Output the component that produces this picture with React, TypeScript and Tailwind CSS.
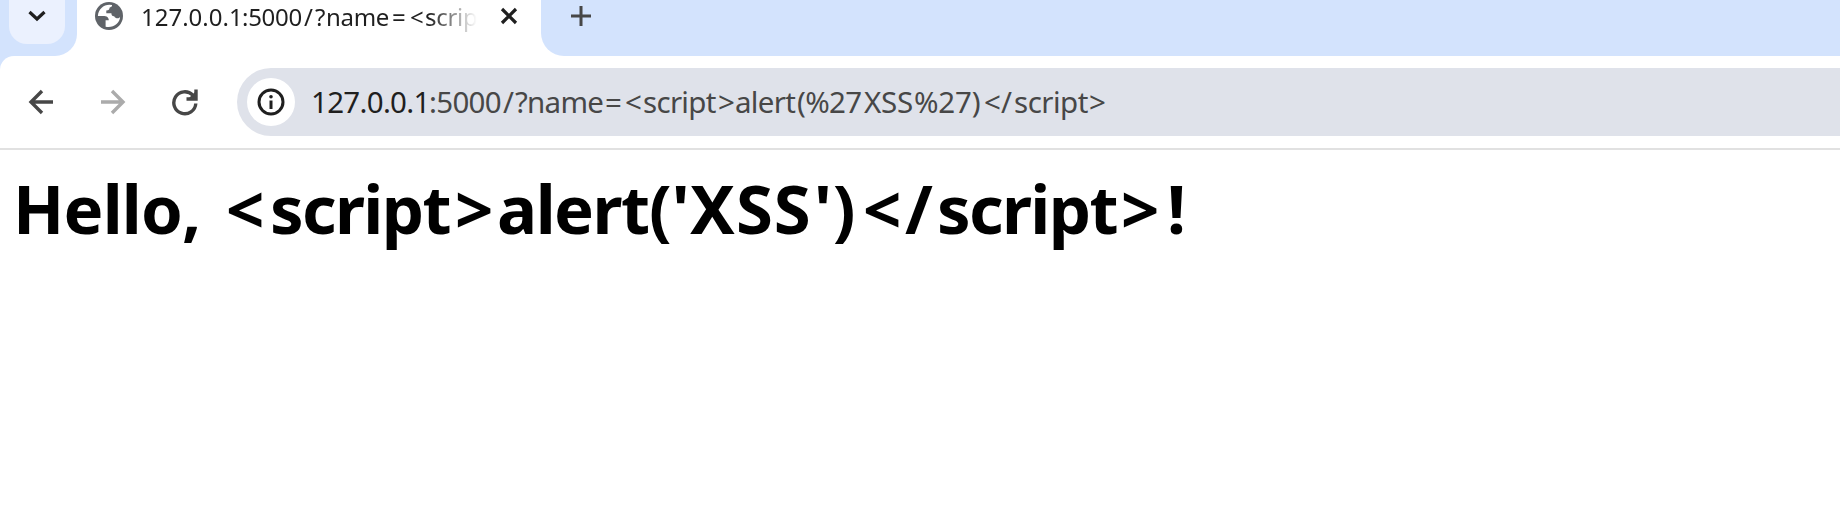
import { ReactNode } from "react";

function Seg({ w, children }: { w: string; children: ReactNode }) {
  return <span className={"inline-block shrink-0 " + w}>{children}</span>;
}

function TabStrip() {
  return (
    <div className="flex h-14 bg-[#d3e3fd]">
      <div className="flex h-14 w-[77px] shrink-0 bg-white">
        <div className="h-14 w-[77px] rounded-br-[22px] bg-[#d3e3fd] pl-[9px]">
          <div className="flex h-11 w-14 items-start justify-center rounded-b-[18px] bg-[#ebf1fe]">
            <svg width="18" height="12" viewBox="0 0 18 12" className="mt-[10px]">
              <path d="M1.5 2 L9 9 L16.500 2" fill="none" stroke="#1f1f1f" strokeWidth="3.2" />
            </svg>
          </div>
        </div>
      </div>
      <div className="flex h-14 w-[464px] shrink-0 items-start bg-white pl-[18px]">
        <svg width="28" height="28" viewBox="0 0 28 28" className="mt-[2px] shrink-0">
          <circle cx="14" cy="14" r="14" fill="#5f6368" />
          <path
            d="M14.500 2.800 C8.300 2.800 3.300 7.600 2.900 13.900 L8 13.900 C12 13.900 13.700 15.300 13.800 18.300 L10.600 18.300 L10.600 24.700 C18 26.500 25 21 25.100 14.700 C24 16.900 20.400 16.700 19.200 14.200 C17.300 14.300 16.400 13.300 16.400 11.200 L11.300 11.200 L11.300 8.500 C13.800 8.300 14.600 7.400 14.500 5.800 L17 4.200 L17 3 Z"
            fill="#fff"
          />
        </svg>
        <div className="ml-[18px] flex h-[34px] w-[340px] overflow-hidden whitespace-pre text-[24px] leading-[34px] tracking-[-0.3px] text-[#1f1f1f] [mask-image:linear-gradient(to_right,black_288px,transparent_336px)]">
          <Seg w="w-[101px] tracking-[0px]">127.0.0.1</Seg>
          <Seg w="w-[62px]">:5000</Seg>
          <Seg w="w-[11px]">/</Seg>
          <Seg w="w-[11px]">?</Seg>
          <Seg w="w-[66px]">name</Seg>
          <Seg w="w-[18px]">=</Seg>
          <Seg w="w-[15px]">&lt;</Seg>
          <Seg w="w-[70px]">script</Seg>
        </div>
        <svg width="18" height="18" viewBox="0 0 18 18" className="ml-[19px] mt-[7px] shrink-0">
          <path d="M2 2 L16 16 M16 2 L2 16" stroke="#1f1f1f" strokeWidth="3.2" />
        </svg>
      </div>
      <div className="h-14 flex-1 bg-white">
        <div className="h-14 rounded-bl-[23px] bg-[#d3e3fd] pl-[30px] pt-[6px]">
          <svg width="20" height="20" viewBox="0 0 20 20">
            <path d="M10 0 V20 M0 10 H20" stroke="#474747" strokeWidth="3" />
          </svg>
        </div>
      </div>
    </div>
  );
}

function Toolbar() {
  return (
    <div className="bg-[#d3e3fd]">
      <div className="flex h-[94px] items-start rounded-tl-[14px] border-b-2 border-[#e1e1e1] bg-white pt-3">
        <svg width="26" height="26" viewBox="0 0 26 26" className="ml-[28px] mt-[21px] shrink-0">
          <path d="M25 13 H3 M14 2 L3 13 L14 24" fill="none" stroke="#474747" strokeWidth="3.4" />
        </svg>
        <svg width="26" height="26" viewBox="0 0 26 26" className="ml-[46px] mt-[21px] shrink-0">
          <path d="M1 13 H23 M12 2 L23 13 L12 24" fill="none" stroke="#ababab" strokeWidth="3.4" />
        </svg>
        <svg width="28" height="28" viewBox="0 0 28 28" className="ml-[45px] mr-px mt-[20px] shrink-0">
          <path d="M24.800 15.500 A11 11 0 1 1 21.800 7.200" fill="none" stroke="#474747" strokeWidth="3.4" />
          <path d="M15.500 11 H25 V1.500" fill="none" stroke="#474747" strokeWidth="3.400" />
          <path d="M18 10 L24 4 V10 Z" fill="#474747" />
        </svg>
        <div className="ml-[37px] flex h-[68px] flex-1 items-center rounded-l-full bg-[#dfe2ea] pl-[10px]">
          <div className="flex size-12 shrink-0 items-center justify-center rounded-full bg-white">
            <svg width="28" height="28" viewBox="0 0 28 28">
              <circle cx="14" cy="14" r="12" fill="none" stroke="#1f1f1f" strokeWidth="3" />
              <path d="M14 12.500 V21" stroke="#1f1f1f" strokeWidth="3" />
              <circle cx="14" cy="8.800" r="1.800" fill="#1f1f1f" />
            </svg>
          </div>
          <div className="ml-[16px] flex whitespace-pre pb-px text-[29.500px] leading-[40px] tracking-[-0.7px] text-[#474747]">
            <Seg w="w-[118px] text-[#1f1f1f]">127.0.0.1</Seg>
            <Seg w="w-[74px]">:5000</Seg>
            <Seg w="w-[12px]">/</Seg>
            <Seg w="w-[12px]">?</Seg>
            <Seg w="w-[78px]">name</Seg>
            <Seg w="w-[20px]">=</Seg>
            <Seg w="w-[18px]">&lt;</Seg>
            <Seg w="w-[75px]">script</Seg>
            <Seg w="w-[17px]">&gt;</Seg>
            <Seg w="w-[62px]">alert</Seg>
            <Seg w="w-[67px]">(%27</Seg>
            <Seg w="w-[50px] tracking-[-0.3px]">XSS</Seg>
            <Seg w="w-[70px] tracking-[-0.2px]">%27)</Seg>
            <Seg w="w-[17px]">&lt;</Seg>
            <Seg w="w-[13px]">/</Seg>
            <Seg w="w-[75px] tracking-[-0.5px]">script</Seg>
            <Seg w="w-[18px]">&gt;</Seg>
          </div>
        </div>
      </div>
    </div>
  );
}

export default function App() {
  return (
    <div className="h-[513px] w-full overflow-hidden bg-white font-['Noto_Sans','Open_Sans',sans-serif]">
      <TabStrip />
      <Toolbar />
      <h1 className="flex whitespace-pre pl-[13px] pt-[12px] text-[67px] leading-[92px] font-bold text-black">
        <Seg w="w-[213px] tracking-[-0.8px]">Hello, </Seg>
        <Seg w="w-[44px]">&lt;</Seg>
        <Seg w="w-[185px] tracking-[-1.6px]">script</Seg>
        <Seg w="w-[42px]">&gt;</Seg>
        <Seg w="w-[152px] tracking-[-1.5px]">alert</Seg>
        <Seg w="w-[41px]">('</Seg>
        <Seg w="w-[124px] tracking-[1px]">XSS</Seg>
        <Seg w="w-[49px] tracking-[1px]">')</Seg>
        <Seg w="w-[42px]">&lt;</Seg>
        <Seg w="w-[32px]">/</Seg>
        <Seg w="w-[184px] tracking-[-1.600px]">script</Seg>
        <Seg w="w-[46px]">&gt;</Seg>
        <Seg w="w-[20px]">!</Seg>
      </h1>
    </div>
  );
}
